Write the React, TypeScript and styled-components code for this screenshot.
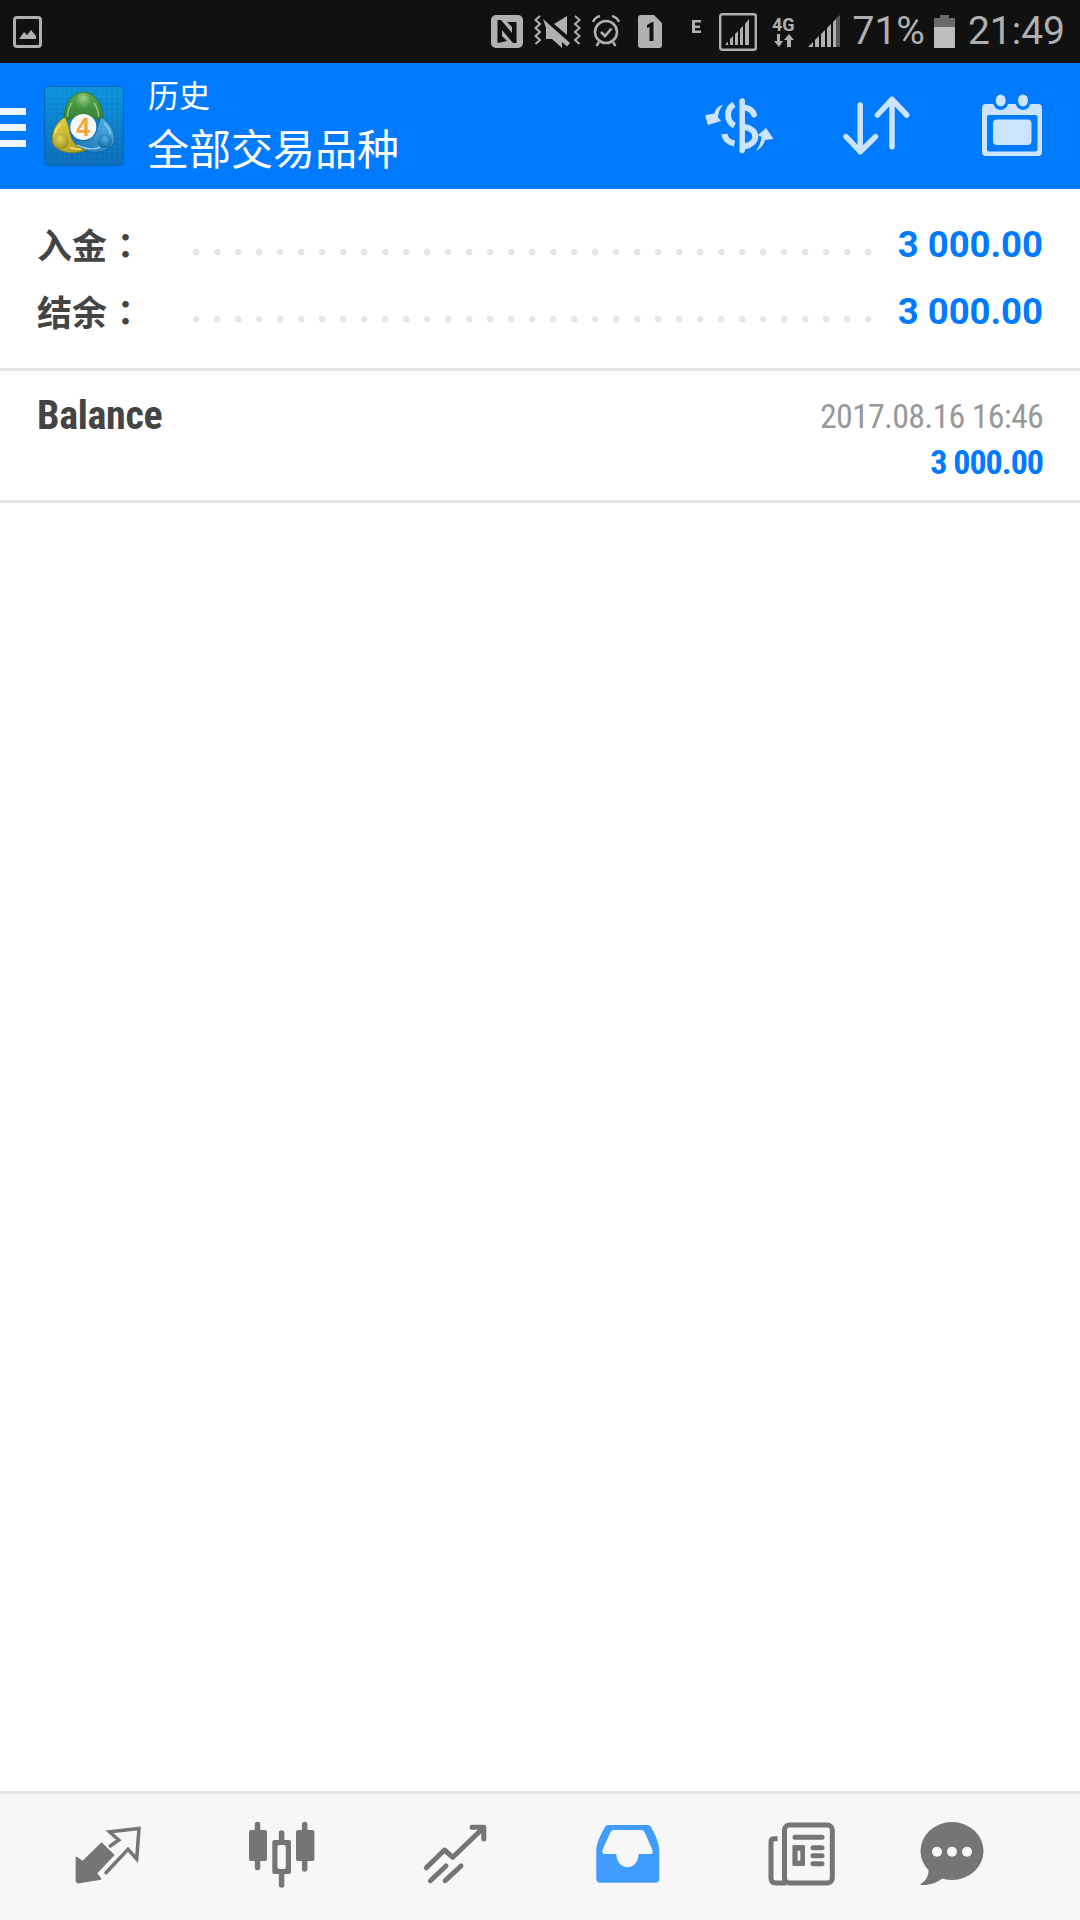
import React from 'react'
import styled, { createGlobalStyle } from 'styled-components'

const GlobalStyle = createGlobalStyle`
  html, body {
    margin: 0;
    padding: 0;
    background: #fff;
  }
  * {
    box-sizing: border-box;
  }
`

const BLUE = '#007aff'
const ICON_LIGHT = '#cce4ff'
const TAB_GREY = '#757575'
const TAB_BG = '#f7f7f7'
const STATUS_GREY = '#b0b0b0'
const CJK = '"Roboto", "Noto Sans CJK SC", sans-serif'
const CONDENSED = '"Roboto Condensed", "Roboto", "Noto Sans CJK SC", sans-serif'

const Page = styled.div`
  width: 1080px;
  height: 1920px;
  display: flex;
  flex-direction: column;
  background: #fff;
  font-family: ${CJK};
`

const StatusBar = styled.div`
  height: 63px;
  flex: none;
  display: flex;
  align-items: center;
  padding: 0 15px 0 13px;
  background: #111;
  color: ${STATUS_GREY};
`

const StatusSpacer = styled.div`
  flex: 1;
`

const StatusIcon = styled.svg<{ $gap?: number }>`
  display: block;
  flex: none;
  margin-left: ${(p) => p.$gap ?? 0}px;
`

const StatusText = styled.span<{ $gap: number }>`
  margin-left: ${(p) => p.$gap}px;
  font-size: 39px;
  line-height: 63px;
  white-space: nowrap;
`

const AppBar = styled.header`
  height: 126px;
  flex: none;
  display: flex;
  align-items: center;
  padding-right: 32px;
  background: ${BLUE};
  color: #fff;
`

const Menu = styled.div`
  width: 26px;
  flex: none;
  display: flex;
  flex-direction: column;
  gap: 9px;
  margin-top: 3px;
`

const MenuBar = styled.span`
  display: block;
  height: 7px;
  background: #eef6ff;
`

const Logo = styled.svg`
  display: block;
  flex: none;
  margin-left: 18px;
  border-radius: 4px;
`

const Titles = styled.div`
  flex: 1;
  margin-left: 23px;
`

const SmallTitle = styled.div`
  font-size: 31px;
  line-height: 40px;
  margin: 2px 0 0 1px;
`

const BigTitle = styled.div`
  font-size: 42px;
  line-height: 54px;
  margin-top: 7px;
`

const Actions = styled.div`
  display: flex;
  gap: 64.5px;
`

const Summary = styled.section`
  flex: none;
  height: 182px;
  padding-top: 22px;
  border-bottom: 3px solid #e5e5e5;
`

const SummaryRow = styled.div`
  height: 67px;
  display: flex;
  align-items: center;
  padding: 0 37px;
`

const SummaryLabel = styled.div`
  width: 156px;
  flex: none;
  display: flex;
  margin-top: -3px;
  font-size: 35px;
  font-weight: 700;
  color: #444;
`

const LabelColon = styled.span`
  font-family: "Noto Sans CJK JP", sans-serif;
  margin-left: 1px;
`

const Dots = styled.div`
  width: 690px;
  height: 100%;
  flex: none;
  background-image: radial-gradient(circle at 3.25px 3.25px, #e6e6e6 3.1px, transparent 3.5px);
  background-size: 21px 7px;
  background-repeat: repeat-x;
  background-position: 0 38px;
`

const SummaryValue = styled.div`
  margin-left: auto;
  font-size: 36.5px;
  font-weight: 700;
  color: ${BLUE};
`

const TradeRow = styled.section`
  flex: none;
  height: 132px;
  display: flex;
  justify-content: space-between;
  align-items: flex-start;
  padding: 22px 37px 0;
  border-bottom: 3px solid #e5e5e5;
  font-family: ${CONDENSED};
`

const TradeName = styled.div`
  margin-top: 3px;
  font-size: 40px;
  line-height: 40px;
  font-weight: 700;
  letter-spacing: -0.3px;
  color: #444;
`

const TradeInfo = styled.div`
  text-align: right;
`

const TradeDate = styled.div`
  font-size: 34px;
  line-height: 46px;
  letter-spacing: -0.75px;
  color: #999;
`

const TradeAmount = styled.div`
  font-size: 34px;
  line-height: 46px;
  font-weight: 700;
  letter-spacing: -1px;
  color: ${BLUE};
`

const Empty = styled.main`
  flex: 1;
  background: #fff;
`

const TabBar = styled.nav`
  flex: none;
  height: 129px;
  display: grid;
  grid-template-columns: repeat(5, 173.5px) 126px;
  padding: 25px 0 0 21px;
  border-top: 3px solid #e5e5e5;
  background: ${TAB_BG};
`

const Tab = styled.div`
  display: flex;
  justify-content: center;
  align-items: flex-start;
`

const TabIcon = styled.svg`
  display: block;
  flex: none;
`

const ImageIcon = () => (
  <StatusIcon width="29" height="32" viewBox="0 0 29 32">
    <rect x="1.5" y="1.5" width="26" height="29" rx="2.5" fill="none" stroke={STATUS_GREY} strokeWidth="3" />
    <path d="M6 23 L11 16 L14 19 L18 14 L23 20 V23 Z" fill={STATUS_GREY} />
  </StatusIcon>
)

const NfcIcon = () => (
  <StatusIcon width="32" height="33" viewBox="0 0 32 33">
    <rect x="0" y="0" width="32" height="33" rx="5" fill={STATUS_GREY} />
    <path d="M6.5 28 V5 H10 L21 18 V12 L16 7 H25.5 V28 H22 L11 15 V21 L16 26 Z" fill="#111" />
  </StatusIcon>
)

const MuteIcon = () => (
  <StatusIcon $gap={11} width="47" height="33" viewBox="0 0 47 33">
    <path d="M6 1 L1.5 5 L6 9 L1.5 13 L6 17 L1.5 21 L6 25 L1.5 29" fill="none" stroke={STATUS_GREY} strokeWidth="2" />
    <path d="M41 1 L45.5 5 L41 9 L45.5 13 L41 17 L45.5 21 L41 25 L45.5 29" fill="none" stroke={STATUS_GREY} strokeWidth="2" />
    <path d="M9 4 L36 28 L33 31.5 L28 27 V33 L18 24 H12 V13 Z" fill={STATUS_GREY} />
    <path d="M20 9 L33 1 V20 Z" fill={STATUS_GREY} />
  </StatusIcon>
)

const AlarmIcon = () => (
  <StatusIcon $gap={11} width="28" height="33" viewBox="0 0 28 33">
    <circle cx="14" cy="17" r="11" fill="none" stroke={STATUS_GREY} strokeWidth="2.6" />
    <path d="M9 17 L13 21 L19.5 13.5" fill="none" stroke={STATUS_GREY} strokeWidth="2.6" />
    <path d="M1 7 Q3 2 8 1 M27 7 Q25 2 20 1 M7 27 L4.5 31 M21 27 L23.5 31" fill="none" stroke={STATUS_GREY} strokeWidth="2.4" />
  </StatusIcon>
)

const SimIcon = () => (
  <StatusIcon $gap={18} width="24" height="33" viewBox="0 0 24 33">
    <path d="M3 0 H16 L24 8 V30 Q24 33 21 33 H3 Q0 33 0 30 V3 Q0 0 3 0 Z" fill={STATUS_GREY} />
    <path d="M9 10 L14 7 H15.5 V26 H11.5 V12 L9 13 Z" fill="#111" />
  </StatusIcon>
)

const EdgeIcon = () => (
  <StatusIcon $gap={30} width="9" height="34" viewBox="0 0 9 34">
    <path d="M0 5 H9 V7.5 H3 V10.5 H8 V13 H3 V15.5 H9 V18 H0 Z" fill={STATUS_GREY} />
  </StatusIcon>
)

const SignalBoxIcon = () => (
  <StatusIcon $gap={18} width="38" height="38" viewBox="0 0 38 38">
    <rect x="1.2" y="1.2" width="35.6" height="35.6" rx="2" fill="none" stroke={STATUS_GREY} strokeWidth="2.4" />
    <path d="M6 32 L9 28.5 V32 Z M11 32 V26 L14 23 V32 Z M16 32 V21 L19 18 V32 Z M21 32 V16 L24 13 V32 Z M26 32 V11 L30 6 V32 Z" fill={STATUS_GREY} />
  </StatusIcon>
)

const NetworkIcon = () => (
  <StatusIcon $gap={15} width="24" height="33" viewBox="0 0 24 33" fontFamily="Roboto, sans-serif">
    <text x="0" y="16" fontSize="18" fontWeight="700" fill={STATUS_GREY}>4G</text>
    <path d="M5 19 V26 H2 L7 32 L11 26 H8 V19 Z M15 32 V25 H12 L17 19 L22 25 H19 V32 Z" fill={STATUS_GREY} />
  </StatusIcon>
)

const SignalIcon = () => (
  <StatusIcon $gap={12} width="32" height="33" viewBox="0 0 32 33">
    <path d="M0 32 L5 27 V32 Z M7 32 V25 L11 21 V32 Z M13 32 V19 L17 15 V32 Z M19 32 V13 L23 9 V32 Z" fill={STATUS_GREY} />
    <path d="M25 32 V7 L28 4 V32 Z" fill={STATUS_GREY} />
    <path d="M28 32 V3 L32 0 V32 Z" fill="#555" />
  </StatusIcon>
)

const BatteryIcon = () => (
  <StatusIcon $gap={9} width="21" height="33" viewBox="0 0 21 33">
    <rect x="6" y="0" width="9" height="3" fill="#6a6a6a" />
    <rect x="0" y="3" width="21" height="10" fill="#6a6a6a" />
    <rect x="0" y="12" width="21" height="21" fill="#bdbdbd" />
  </StatusIcon>
)

const MtLogo = () => (
  <Logo width="80" height="80" viewBox="0 0 80 80">
    <defs>
      <linearGradient id="logoBg" x1="0" y1="0" x2="0" y2="1">
        <stop offset="0" stopColor="#0b93dc" />
        <stop offset="1" stopColor="#0a6bb9" />
      </linearGradient>
      <linearGradient id="logoGreen" x1="0" y1="0" x2="0" y2="1">
        <stop offset="0" stopColor="#5aa84a" />
        <stop offset="1" stopColor="#2f7d33" />
      </linearGradient>
      <linearGradient id="logoYellow" x1="0" y1="0" x2="1" y2="1">
        <stop offset="0" stopColor="#e3d548" />
        <stop offset="1" stopColor="#a8981f" />
      </linearGradient>
      <linearGradient id="logoBlue" x1="1" y1="0" x2="0" y2="1">
        <stop offset="0" stopColor="#57b6e6" />
        <stop offset="1" stopColor="#1572b0" />
      </linearGradient>
      <radialGradient id="headGreen" cx="0.5" cy="0.35" r="0.7">
        <stop offset="0" stopColor="#9ed08a" />
        <stop offset="1" stopColor="#3f8f3c" />
      </radialGradient>
      <radialGradient id="headYellow" cx="0.45" cy="0.35" r="0.7">
        <stop offset="0" stopColor="#e6d95a" />
        <stop offset="1" stopColor="#94861a" />
      </radialGradient>
      <radialGradient id="headBlue" cx="0.5" cy="0.35" r="0.7">
        <stop offset="0" stopColor="#4fb0e2" />
        <stop offset="1" stopColor="#0f5f98" />
      </radialGradient>
      <pattern id="logoGrid" width="5" height="5" patternUnits="userSpaceOnUse">
        <path d="M5 0 H0 V5" fill="none" stroke="#fff" strokeOpacity="0.06" />
      </pattern>
    </defs>
    <rect x="0.5" y="0.5" width="79" height="79" rx="4" fill="url(#logoBg)" stroke="#0a66b0" />
    <rect x="2" y="2" width="76" height="76" fill="url(#logoGrid)" />
    <path d="M39 6 C51 6 60 19 59 36 L50 32 L28 32 L20 36 C19 19 28 6 39 6 Z" fill="url(#logoGreen)" stroke="#2b6f2f" strokeWidth="0.8" />
    <path d="M28 17 C25 21 23.5 26 23.5 31 M50 17 C53 21 54.5 26 54.5 31" fill="none" stroke="#8cc878" strokeWidth="1.6" />
    <path d="M57 31 C66 36 72 46 70 57 C63 67 47 69 36 63 C28 58 30 55 36 54 C46 56 52 50 53 42 Z" fill="url(#logoBlue)" stroke="#0f5e9c" strokeWidth="0.8" />
    <path d="M60 37 C64 41 66 45 66.5 48 M33 59 C42 63.5 50 63.5 56 61.5" fill="none" stroke="#8fd0f0" strokeWidth="1.4" />
    <path d="M21 31 C12 36 6 48 9 58 C15 67 30 69 42 64 C33 62 27 55 26 47 C25 40 23 35 21 31 Z" fill="url(#logoYellow)" stroke="#857818" strokeWidth="0.8" />
    <path d="M17 38 C13.5 41 11.5 44 11 47 M26 61.5 C30 63 34 63.5 37 63.5" fill="none" stroke="#f1e777" strokeWidth="1.4" />
    <circle cx="39.3" cy="14.5" r="7.5" fill="url(#headGreen)" />
    <circle cx="16.7" cy="55.3" r="8" fill="url(#headYellow)" />
    <circle cx="61" cy="55" r="7" fill="url(#headBlue)" />
    <circle cx="39.3" cy="41" r="13" fill="#f7f7f5" />
    <text x="39.3" y="50" textAnchor="middle" fontFamily="Liberation Sans, sans-serif" fontSize="25" fontWeight="700" fill="#f6a33e">4</text>
  </Logo>
)

const DollarIcon = () => (
  <TabIcon width="72" height="72" viewBox="0 0 72 72">
    <g fill="none" stroke={ICON_LIGHT} strokeWidth="6">
      <path d="M39.2 11 V60.5" strokeWidth="5.5" strokeLinecap="round" />
      <path d="M31 14.3 C23 19 23 31 31.5 35.7" />
      <path d="M41 17.5 C46 18 49.5 20.5 51 24.5" strokeLinecap="round" />
      <path d="M41 37 C56 39 56 54 41 56.5" />
      <path d="M21.5 44 C22 49 26 52.5 31.5 53.5" />
    </g>
    <g fill={ICON_LIGHT}>
      <path d="M20 15 C15 16 12.5 19 11.5 23.5 L3 25 Q2 25 2.5 27 L5 35 L18 31 L15 27.5 C15.5 22 17 18 20 15 Z" />
      <path d="M53 61 C58 58 60.5 55 62 50 L70.5 49 L63 38 L55 45 L58.5 47 C58 52 56 57 53 61 Z" />
    </g>
  </TabIcon>
)

const SortIcon = () => (
  <TabIcon width="72" height="72" viewBox="0 0 72 72">
    <path
      d="M20.2 15 V61.7 M6 46.7 L20.2 61.7 L35.5 46.7 M52 56.7 V9.3 M37.5 25 L52 9.3 L66.7 25"
      fill="none"
      stroke={ICON_LIGHT}
      strokeWidth="5.5"
      strokeLinecap="round"
      strokeLinejoin="round"
    />
  </TabIcon>
)

const CalendarIcon = () => (
  <TabIcon width="72" height="72" viewBox="0 0 72 72">
    <rect x="6" y="14" width="60" height="52" rx="4" fill={ICON_LIGHT} />
    <rect x="11" y="25" width="50.5" height="36.5" rx="2" fill={BLUE} />
    <rect x="17" y="29.5" width="38.5" height="25.5" rx="4" fill={ICON_LIGHT} />
    <ellipse cx="24.7" cy="11" rx="8" ry="9" fill={BLUE} />
    <ellipse cx="47" cy="11" rx="8" ry="9" fill={BLUE} />
    <ellipse cx="24.7" cy="10.5" rx="5" ry="6" fill={ICON_LIGHT} />
    <ellipse cx="47" cy="10.5" rx="5" ry="6" fill={ICON_LIGHT} />
  </TabIcon>
)

const TradeIcon = () => (
  <TabIcon width="80" height="72" viewBox="0 0 80 72">
    <path
      d="M8.4 38.3 L14.6 42.7 L33.6 24.3 L45.6 36 L28.4 54.3 L32.6 60 L10 63.7 L8.4 62 Z"
      fill={TAB_GREY}
      stroke={TAB_GREY}
      strokeWidth="1.5"
      strokeLinejoin="round"
    />
    <path
      d="M42.2 27 L50.8 21 L41.5 12.7 L71 9.5 L68.7 40 L60 30.3 L38 53.7"
      fill="none"
      stroke={TAB_GREY}
      strokeWidth="3.5"
      strokeLinecap="round"
    />
  </TabIcon>
)

const CandlesIcon = () => (
  <TabIcon width="80" height="72" viewBox="0 0 80 72">
    <g stroke={TAB_GREY} strokeWidth="5.5" strokeLinecap="round">
      <path d="M16.5 5.5 V48.5 M40.6 14 V66 M63.7 5.5 V50" />
    </g>
    <rect x="8" y="11" width="18" height="31" rx="2" fill={TAB_GREY} />
    <rect x="55" y="11" width="18.4" height="31" rx="2" fill={TAB_GREY} />
    <rect x="31.3" y="21" width="18.7" height="34" rx="2" fill={TAB_GREY} />
    <rect x="36.5" y="26" width="8.3" height="24" rx="2" fill={TAB_BG} />
  </TabIcon>
)

const ChartIcon = () => (
  <TabIcon width="80" height="72" viewBox="0 0 80 72">
    <path
      d="M11.3 48.7 L29.5 31 L37.8 38.3 L68 9.3 M57 8.3 H68.8 V20 M15.4 61.7 L31 47 M30.2 61.7 L46 47"
      fill="none"
      stroke={TAB_GREY}
      strokeWidth="5"
      strokeLinecap="round"
      strokeLinejoin="round"
    />
  </TabIcon>
)

const InboxIcon = () => (
  <TabIcon width="80" height="72" viewBox="0 0 80 72">
    <path
      fillRule="evenodd"
      fill="#409cff"
      d="M20 6 H60 Q62 6 63 8 C68 17 71.3 24 71.3 32.7 V59.7 Q71.3 63.7 67.3 63.7 H12.3 Q8.3 63.7 8.3 59.7 V32.7 C8.3 24 12 17 17 8 Q18 6 20 6 Z M26 11 C24 11 23 12 22 14 L14.5 31 Q13.5 35 17 35 H28.3 C28.3 43 34 48.3 39.5 48.3 C45 48.3 50.6 43 50.6 35 H62 Q65.5 35 64.5 31 L57 14 C56 12 55 11 53 11 Z"
    />
  </TabIcon>
)

const NewsIcon = () => (
  <TabIcon width="80" height="72" viewBox="0 0 80 72">
    <g fill="none" stroke={TAB_GREY} strokeWidth="5" strokeLinecap="round">
      <rect x="22.5" y="6" width="47.8" height="58" rx="5" />
      <path d="M15.6 19.7 H12 Q9 19.7 9 23 V59 Q9 64 14 64 H24" strokeLinecap="butt" />
      <path d="M33 18.3 H60 M51 28.7 H60 M51 36.7 H60 M51 44.7 H60" />
    </g>
    <path
      fillRule="evenodd"
      fill={TAB_GREY}
      d="M32 26 H41.5 Q43 26 43 27.5 V45.5 Q43 47 41.5 47 H32 Q30.4 47 30.4 45.5 V27.5 Q30.4 26 32 26 Z M35.6 31.7 V41.7 H38.3 V31.7 Z"
    />
  </TabIcon>
)

const ChatIcon = () => (
  <TabIcon width="80" height="72" viewBox="0 0 80 72">
    <ellipse cx="40" cy="32" rx="31.5" ry="29" fill={TAB_GREY} />
    <path d="M16.4 48 C17.5 56 14 62 8.5 65 L8.5 66 C17 66.5 25 64 31 59 Z" fill={TAB_GREY} />
    <circle cx="25" cy="32.7" r="5" fill={TAB_BG} />
    <circle cx="40" cy="32.7" r="5" fill={TAB_BG} />
    <circle cx="55" cy="32.7" r="5" fill={TAB_BG} />
  </TabIcon>
)

const summary = [
  { label: '入金', value: '3 000.00' },
  { label: '结余', value: '3 000.00' }
]

const tabs = [TradeIcon, CandlesIcon, ChartIcon, InboxIcon, NewsIcon, ChatIcon]

export default function App() {
  return (
    <Page>
      <GlobalStyle />
      <StatusBar>
        <ImageIcon />
        <StatusSpacer />
        <NfcIcon />
        <MuteIcon />
        <AlarmIcon />
        <SimIcon />
        <EdgeIcon />
        <SignalBoxIcon />
        <NetworkIcon />
        <SignalIcon />
        <StatusText $gap={12}>71%</StatusText>
        <BatteryIcon />
        <StatusText $gap={13}>21:49</StatusText>
      </StatusBar>
      <AppBar>
        <Menu>
          <MenuBar />
          <MenuBar />
          <MenuBar />
        </Menu>
        <MtLogo />
        <Titles>
          <SmallTitle>历史</SmallTitle>
          <BigTitle>全部交易品种</BigTitle>
        </Titles>
        <Actions>
          <DollarIcon />
          <SortIcon />
          <CalendarIcon />
        </Actions>
      </AppBar>
      <Summary>
        {summary.map((row) => (
          <SummaryRow key={row.label}>
            <SummaryLabel>
              {row.label}
              <LabelColon>：</LabelColon>
            </SummaryLabel>
            <Dots />
            <SummaryValue>{row.value}</SummaryValue>
          </SummaryRow>
        ))}
      </Summary>
      <TradeRow>
        <TradeName>Balance</TradeName>
        <TradeInfo>
          <TradeDate>2017.08.16 16:46</TradeDate>
          <TradeAmount>3 000.00</TradeAmount>
        </TradeInfo>
      </TradeRow>
      <Empty />
      <TabBar>
        {tabs.map((Icon, i) => (
          <Tab key={i}>
            <Icon />
          </Tab>
        ))}
      </TabBar>
    </Page>
  )
}
